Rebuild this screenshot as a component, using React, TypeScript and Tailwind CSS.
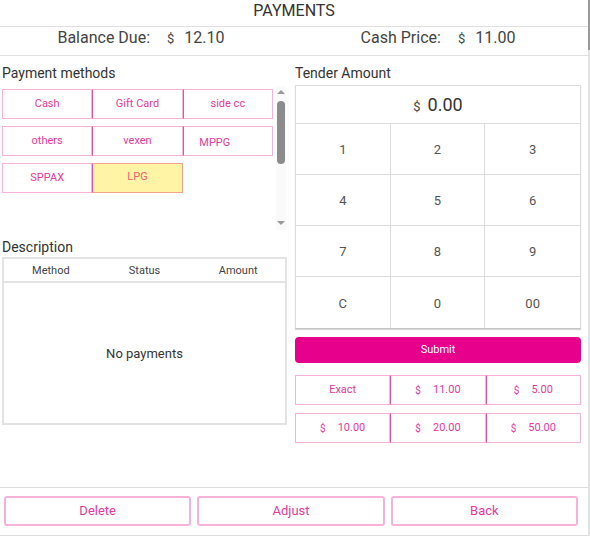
const methods = ['Cash', 'Gift Card', 'side cc', 'others', 'vexen', 'MPPG', 'SPPAX', 'LPG']
const keys = ['1', '2', '3', '4', '5', '6', '7', '8', '9', 'C', '0', '00']
const quick = [
  { label: 'Exact' },
  { label: '11.00', cash: true },
  { label: '5.00', cash: true },
  { label: '10.00', cash: true },
  { label: '20.00', cash: true },
  { label: '50.00', cash: true },
]

function MethodButton({ name, col }: { name: string; col: number }) {
  const selected = name === 'LPG'
  return (
    <button
      className={
        'h-[30px] flex items-center justify-center text-[11px] border ' +
        (col > 0 ? 'border-l-[#e8509f] ' : '') +
        (selected
          ? 'bg-[#fff3a6] border-[#f3a48c] text-[#f0626e] pb-[2px]'
          : 'bg-white border-[#f8b2da] text-[#e8399c] pt-[1px]') +
        (name === 'MPPG' ? ' pr-[26px] pt-[5px]' : '')
      }
    >
      {name}
    </button>
  )
}

export default function App() {
  return (
    <div className="flex w-[590px] h-[536px] bg-white text-[#333] font-['Roboto','Liberation_Sans',sans-serif]">
      <div className="w-[588px] flex flex-col border-b border-[#dcdcdc]">
        <div className="h-[27px] flex justify-center border-b border-[#e0e0e0]">
          <span className="text-[16px] leading-[20px] pt-[1px]">PAYMENTS</span>
        </div>
        <div className="h-[29px] flex border-b border-[#e0e0e0] text-[#444]">
          <div className="w-[288px] pr-[6px] flex items-baseline justify-center gap-[17px] text-[16px] leading-[22px]">
            <span>Balance Due:</span>
            <span className="flex items-baseline gap-[10px]">
              <span className="text-[13px]">$</span>
              <span>12.10</span>
            </span>
          </div>
          <div className="flex-1 flex items-baseline justify-center gap-[17px] text-[16px] leading-[22px]">
            <span>Cash Price:</span>
            <span className="flex items-baseline gap-[10px]">
              <span className="text-[13px]">$</span>
              <span>11.00</span>
            </span>
          </div>
        </div>

        <div className="flex flex-1">
          <div className="w-[287px] ml-[2px] flex flex-col">
            <div className="mt-[7px] text-[14px] leading-[20px]">Payment methods</div>
            <div className="mt-[3px] h-[144px] flex">
              <div className="w-[271px] pt-[3px] grid grid-cols-3 gap-y-[7px] content-start">
                {methods.map((m, i) => (
                  <MethodButton key={m} name={m} col={i % 3} />
                ))}
              </div>
              <div className="ml-[3px] w-[10px] flex flex-col items-center bg-[#fafafa]">
                <div className="mt-[4px] w-0 h-0 border-x-[4px] border-x-transparent border-b-[4px] border-b-[#999]" />
                <div className="mt-[7px] w-[8px] h-[63px] rounded-full bg-[#8c8c8c]" />
                <div className="flex-1" />
                <div className="mb-[5px] w-0 h-0 border-x-[4px] border-x-transparent border-t-[4px] border-t-[#999]" />
              </div>
            </div>
            <div className="mt-[7px] text-[14px] leading-[20px]">Description</div>
            <div className="h-[168px] w-[285px] border-2 border-[#e3e3e3] flex flex-col">
              <div className="h-[24px] grid grid-cols-3 items-center border-b-2 border-[#e3e3e3] text-[11px] text-[#444] text-center pt-[2px]">
                <span>Method</span>
                <span>Status</span>
                <span>Amount</span>
              </div>
              <div className="flex-1 flex items-center justify-center text-[13px] text-[#333] pt-[2px]">No payments</div>
            </div>
          </div>

          <div className="w-[286px] ml-[6px] flex flex-col">
            <div className="mt-[7px] text-[14px] leading-[20px]">Tender Amount</div>
            <div className="mt-[2px] border border-[#dcdcdc] border-b-[#c4c4c4] shadow-[0_1px_1px_rgba(0,0,0,0.15)]">
              <div className="h-[38px] flex items-baseline justify-center gap-[7px] pt-[5px] border-b border-[#dcdcdc]">
                <span className="text-[13px] text-[#444]">$</span>
                <span className="text-[18px] text-[#333]">0.00</span>
              </div>
              <div className="grid grid-cols-3">
                {keys.map((k, i) => (
                  <div
                    key={k}
                    className={
                      'h-[51px] flex items-center justify-center text-[13px] text-[#555] pt-[2px] ' +
                      (i % 3 < 2 ? 'border-r border-[#dcdcdc] ' : '') +
                      (i < 9 ? 'border-b border-[#dcdcdc]' : '')
                    }
                  >
                    {k}
                  </div>
                ))}
              </div>
            </div>
            <button className="mt-[8px] h-[26px] rounded-[4px] bg-[#e6008c] text-white text-[11px]">Submit</button>
            <div className="mt-[12px] grid grid-cols-3 gap-y-[8px]">
              {quick.map((q, i) => (
                <button
                  key={q.label}
                  className={
                    'h-[30px] flex items-center justify-center gap-[12px] text-[11px] text-[#e8399c] border border-[#f8b2da] ' +
                    (i % 3 > 0 ? 'border-l-[#e8509f]' : '')
                  }
                >
                  {q.cash && <span className="text-[10px]">$</span>}
                  <span>{q.label}</span>
                </button>
              ))}
            </div>
          </div>
        </div>

        <div className="h-[48px] border-t border-[#dcdcdc] grid grid-cols-3 gap-[6px] pl-[4px] pr-[10px] pt-[8px]">
          {['Delete', 'Adjust', 'Back'].map((b) => (
            <button
              key={b}
              className="h-[30px] rounded-[3px] border-2 border-[#f8b2da] text-[13px] text-[#e8399c]"
            >
              {b}
            </button>
          ))}
        </div>
      </div>
      <div className="w-[2px] bg-[#e2e2e2] flex flex-col">
        <div className="h-[50px] bg-[#9a9a9a]" />
      </div>
    </div>
  )
}
